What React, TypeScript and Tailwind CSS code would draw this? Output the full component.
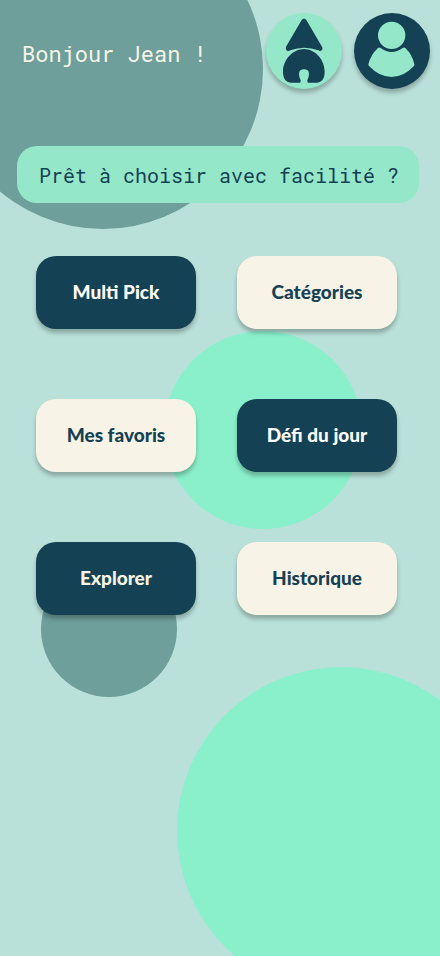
type Tone = "navy" | "cream";

type MenuItem = { label: string; tone: Tone; text: string };

const items: MenuItem[] = [
  { label: "Multi Pick", tone: "navy", text: "text-white" },
  { label: "Catégories", tone: "cream", text: "text-[#154154]" },
  { label: "Mes favoris", tone: "cream", text: "text-[#154154]" },
  { label: "Défi du jour", tone: "navy", text: "text-white" },
  { label: "Explorer", tone: "navy", text: "text-[#f7f4e6]" },
  { label: "Historique", tone: "cream", text: "text-[#154154]" },
];

const tones: Record<Tone, string> = {
  navy: "bg-[#154154]",
  cream: "bg-[#f7f4e7]",
};

function HomeIcon() {
  return (
    <svg viewBox="0 0 228 228" className="size-full" fill="#154154" aria-hidden="true">
      <path d="M107 21 Q114 12 121 21 L168 101 Q172 109 165 113 Q162 115 157 112 Q115 97 73 112 Q68 115 63 113 Q57 109 60 101 Z" />
      <path d="M114 108 C148 108 176 141 176 176 C176 197 167 209 151 209 L126 209 Q123 207 124 202 Q129 192 129 182 C129 173 123 169 114 169 C105 169 99 173 99 182 Q99 193 104 202 Q105 207 102 209 L77 209 C60 209 51 197 51 176 C51 141 80 108 114 108 Z" />
    </svg>
  );
}

function ProfileIcon() {
  return (
    <svg viewBox="0 0 228 228" className="size-full" fill="#94e8c9" aria-hidden="true">
      <circle cx="113" cy="67" r="41" />
      <path d="M72 105 Q76 102 80 105 Q113 129 146 105 Q150 102 154 105 Q175 125 181 154 Q182 157 179 160 Q149 192 113 192 Q76 192 46 160 Q42 157 43 154 Q50 125 72 105 Z" />
    </svg>
  );
}

function Backdrop() {
  return (
    <div className="absolute inset-0 -z-10 overflow-hidden" aria-hidden="true">
      <div className="absolute -top-[91px] -left-[57px] size-80 rounded-full bg-[#6e9f9b]" />
      <div className="absolute top-[331px] left-[164px] size-[198px] rounded-full bg-[#8af0cc]" />
      <div className="absolute top-[561px] left-[41px] size-[136px] rounded-full bg-[#6e9f9b]" />
      <div className="absolute top-[667px] left-[177px] size-[328px] rounded-full bg-[#8af0cc]" />
    </div>
  );
}

export default function App() {
  return (
    <div className="relative isolate min-h-screen bg-[#b9e1d9] font-['Roboto_Mono','Liberation_Mono',monospace]">
      <Backdrop />
      <header className="flex items-center justify-between pt-[13px] pr-[10px] pl-[22px]">
        <h1 className="pt-1.5 text-[22px] leading-7 whitespace-nowrap text-[#f7f4e6]">Bonjour Jean !</h1>
        <nav className="flex gap-3">
          <button
            type="button"
            aria-label="Accueil"
            className="size-[76px] rounded-full bg-[#94e8c9] shadow-[0_4px_4px_rgba(0,0,0,0.25)]"
          >
            <HomeIcon />
          </button>
          <button
            type="button"
            aria-label="Profil"
            className="size-[76px] rounded-full bg-[#154154] shadow-[0_4px_4px_rgba(0,0,0,0.25)]"
          >
            <ProfileIcon />
          </button>
        </nav>
      </header>
      <main>
        <p className="mt-[57px] mr-[21px] ml-[17px] rounded-[20px] bg-[#94e8c9] pt-[17px] pb-[15px] pl-[2px] text-center text-xl leading-[25px] text-[#154154]">
          Prêt à choisir avec facilité ?
        </p>
        <div className="mt-[53px] grid grid-cols-2 gap-x-[41px] gap-y-[70px] pr-[43px] pb-12 pl-9">
          {items.map((item) => (
            <button
              key={item.label}
              type="button"
              className={`h-[73px] rounded-[20px] font-['Lato',sans-serif] text-[19px] font-black shadow-[0_4px_4px_rgba(0,0,0,0.25)] ${tones[item.tone]} ${item.text}`}
            >
              {item.label}
            </button>
          ))}
        </div>
      </main>
    </div>
  );
}
